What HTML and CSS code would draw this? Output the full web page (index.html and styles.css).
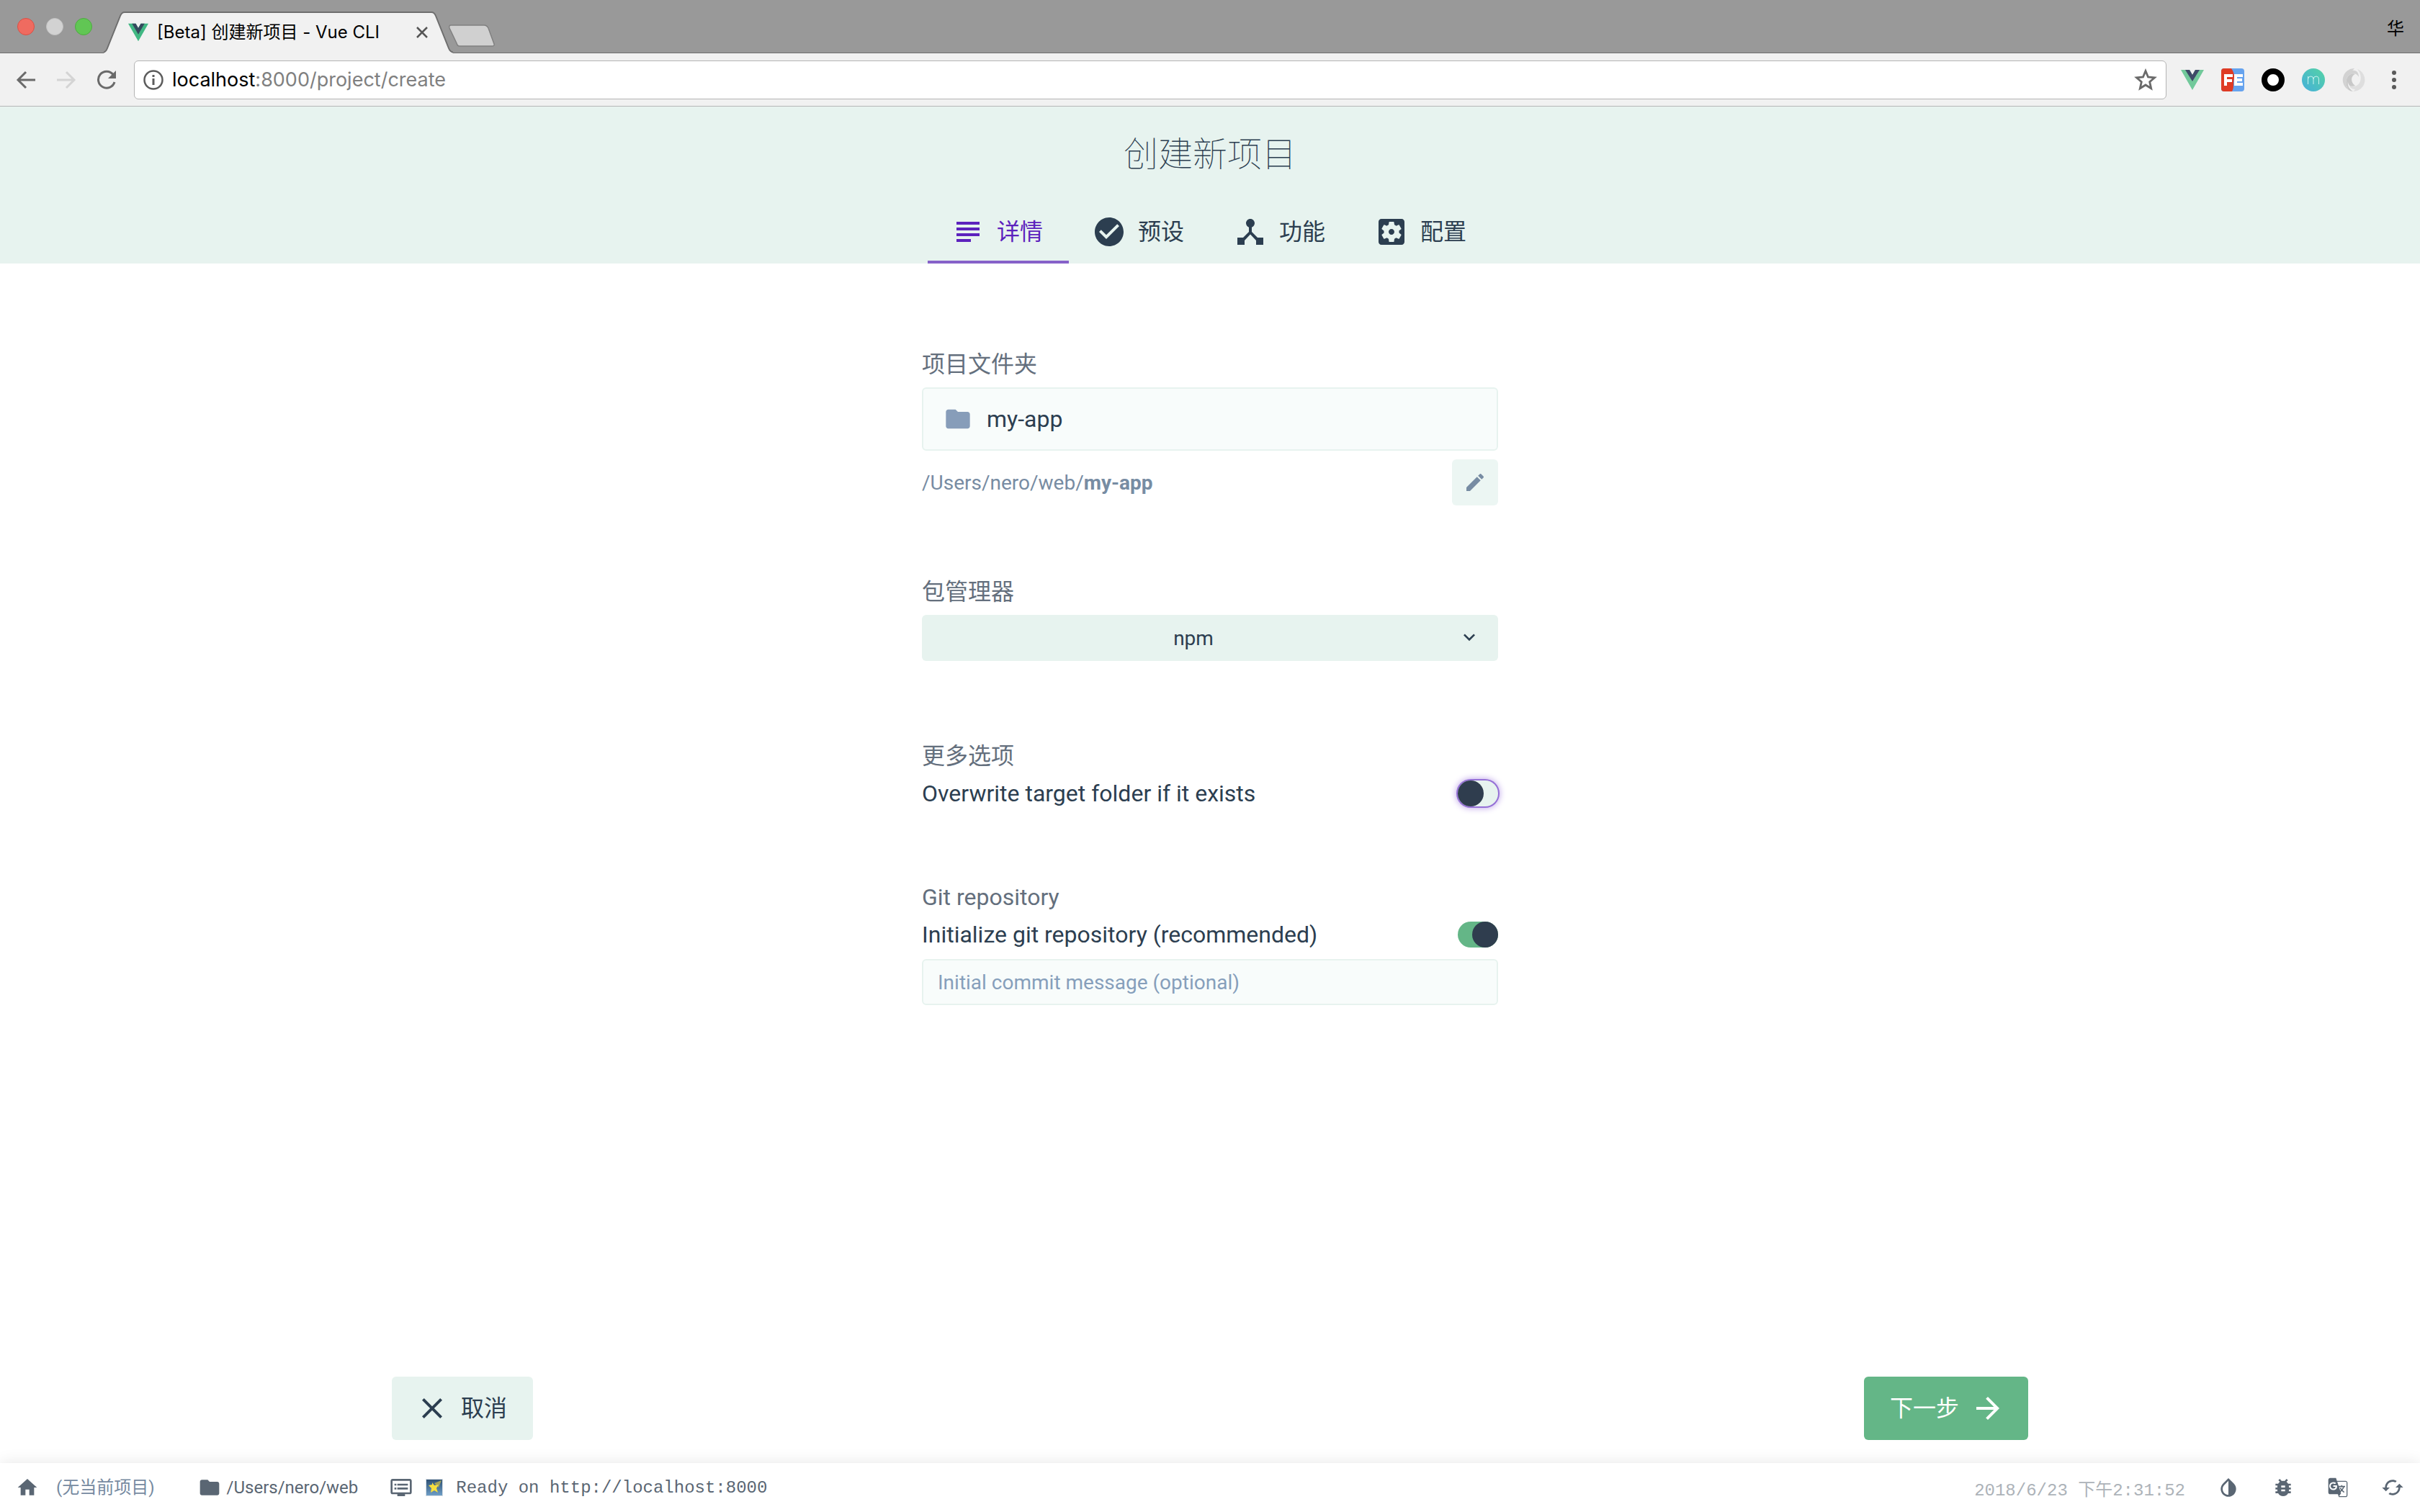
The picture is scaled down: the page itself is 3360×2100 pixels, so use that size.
FILE: index.html
```html
<!DOCTYPE html>
<html lang="zh-CN">
<head>
    <meta charset="UTF-8">
    <meta name="viewport" content="width=device-width, initial-scale=1.0">
    <title>[Beta] 创建新项目 - Vue CLI</title>
    <link rel="stylesheet" href="styles.css">
</head>
<body>
    <div class="browser">
        <div class="tab-strip">
            <div class="lights">
                <button class="light red" aria-label="关闭"></button>
                <button class="light gray" aria-label="最小化"></button>
                <button class="light green" aria-label="全屏"></button>
            </div>
            <div class="browser-tab">
                <svg class="tab-shape" viewBox="0 0 486 58" preserveAspectRatio="none">
                    <path d="M0 57.5 Q3 57 5 51 L23 6 Q25 1 29 1 H455 Q459 1 461 6 L479 51 Q481 57 485 57.5 V58 H0Z" fill="#f1f1f1"/>
                    <path d="M0 56.5 Q3 56 5 51 L23 6 Q25 1 29 1 H455 Q459 1 461 6 L479 51 Q481 56 485 56.5" fill="none" stroke="#6e6e6e" stroke-width="2"/>
                </svg>
                <svg class="favicon" viewBox="0 0 32 28">
                    <path d="M0 0h12l4 7 4-7h12L16 28z" fill="#41b883"/>
                    <path d="M6 0h6l4 7 4-7h6L16 17z" fill="#35495e"/>
                </svg>
                <span class="tab-title">[Beta] 创建新项目 - Vue CLI</span>
                <button class="tab-close" aria-label="关闭标签页">
                    <svg viewBox="0 0 16 16"><path d="M1 1l14 14M15 1L1 15" stroke="#555" stroke-width="2.5"/></svg>
                </button>
            </div>
            <button class="new-tab" aria-label="新标签页">
                <svg viewBox="0 0 66 32"><path d="M4 1h46q4 0 6 4l8 22q1 3-3 3H16q-3 0-4-4L2 5Q1 1 4 1z" fill="#d0d0d0" stroke="#808080" stroke-width="1.5"/></svg>
            </button>
            <span class="profile">华</span>
        </div>

        <div class="toolbar">
            <button class="nav-btn" aria-label="后退">
                <svg viewBox="0 0 28 28"><path d="M27 14H3M14 3L3 14l11 11" fill="none" stroke="#6a6a6a" stroke-width="3"/></svg>
            </button>
            <button class="nav-btn" aria-label="前进">
                <svg viewBox="0 0 28 28"><path d="M1 14h24M14 3l11 11-11 11" fill="none" stroke="#d4d4d4" stroke-width="3"/></svg>
            </button>
            <button class="nav-btn" aria-label="重新加载">
                <svg viewBox="0 0 28 28"><path d="M23 6.500A11.500 11.500 0 1 0 25 17" fill="none" stroke="#6a6a6a" stroke-width="3"/><path d="M27 1v11H16z" fill="#6a6a6a"/></svg>
            </button>
            <div class="omnibox">
                <svg class="info" viewBox="0 0 28 28"><circle cx="14" cy="14" r="12.500" fill="none" stroke="#5c5c5c" stroke-width="2.500"/><path d="M12.500 12h3v9h-3zM12.500 7h3v3h-3z" fill="#5c5c5c"/></svg>
                <div class="url"><span class="host">localhost</span>:8000/project/create</div>
                <button class="star" aria-label="收藏">
                    <svg viewBox="0 0 32 32"><path d="M16 3.500l3.500 8.500 9 .8-6.800 6 2 9-7.700-4.800-7.700 4.800 2-9-6.800-6 9-.8z" fill="none" stroke="#6a6a6a" stroke-width="2.800"/></svg>
                </button>
            </div>
            <div class="extensions">
                <svg viewBox="0 0 32 32"><path d="M0 2h12l4 7 4-7h12L16 30z" fill="#72c99b"/><path d="M6 2h6l4 7 4-7h6L16 18z" fill="#3f4a68"/></svg>
                <svg viewBox="0 0 32 32"><rect width="32" height="32" rx="4" fill="#66a3ee"/><path d="M4 0h10c3 4 4 8 4 12l-1 8c0 5 0 9-2 12H4q-4 0-4-4V4q0-4 4-4z" fill="#df3b24"/><path d="M4 10h12M6 17h9M6 8v16M20 8v16M18 10h12M20 16h9M20 22h10" fill="none" stroke="#fff" stroke-width="4"/></svg>
                <svg viewBox="0 0 32 32"><circle cx="16" cy="16" r="12" fill="#fff" stroke="#000" stroke-width="8"/></svg>
                <svg viewBox="0 0 32 32"><defs><linearGradient id="teal" x1="1" y1="0" x2="0" y2="1"><stop offset="0" stop-color="#55d3a4"/><stop offset="1" stop-color="#45afdb"/></linearGradient></defs><circle cx="16" cy="16" r="16" fill="url(#teal)"/><path d="M8.500 22V11M8.500 15q0-4 4-4 3.500 0 3.500 4v7M16 15q0-4 4-4 3.500 0 3.500 4v7" fill="none" stroke="#c9f2ee" stroke-width="1"/></svg>
                <svg viewBox="0 0 32 32"><path d="M17 0a16 16 0 0 0-8 30c-6-9-4-19 3-22 5-2 9 0 11 4C23 6 20 2 14 3c2-2 3-3 3-3z" fill="#d2d2d2"/><path d="M15 32a16 16 0 0 0 6-31c7 8 6 19-1 23-5 2-10 0-11-5 0 7 4 10 9 10-1 2-3 3-3 3z" fill="#dedede"/><path d="M9 30c-6-9-4-19 3-22 2-1 4-1 6 0-6 2-7 11 0 16-7 2-10-1-10-6-1 5 1 10 7 14-2 0-4-1-6-2z" fill="#c8c8c8"/></svg>
            </div>
            <button class="menu" aria-label="菜单">
                <svg viewBox="0 0 32 32"><circle cx="16" cy="6" r="3" fill="#5a5a5a"/><circle cx="16" cy="16" r="3" fill="#5a5a5a"/><circle cx="16" cy="26" r="3" fill="#5a5a5a"/></svg>
            </button>
        </div>
    </div>

    <header class="header">
        <h1>创建新项目</h1>
        <nav class="tabs">
            <button class="tab active">
                <svg viewBox="0 0 24 24"><path d="M4 17h10v2H4zM4 13h16v2H4zM4 9h16v2H4zM4 5h16v2H4z"/></svg>
                详情
            </button>
            <button class="tab">
                <svg viewBox="0 0 24 24"><path d="M12 2C6.480 2 2 6.480 2 12s4.480 10 10 10 10-4.480 10-10S17.520 2 12 2zm-2 15l-5-5 1.410-1.410L10 14.170l7.590-7.590L19 8l-9 9z"/></svg>
                预设
            </button>
            <button class="tab">
                <svg viewBox="0 0 24 24"><path d="M17 16l-4-4V8.820C14.160 8.400 15 7.300 15 6c0-1.660-1.340-3-3-3S9 4.340 9 6c0 1.300.84 2.400 2 2.820V12l-4 4H3v5h5v-3.050l4-4.200 4 4.200V21h5v-5h-4z"/></svg>
                功能
            </button>
            <button class="tab">
                <svg viewBox="0 0 24 24"><path d="M12 10c-1.100 0-2 .9-2 2s.9 2 2 2 2-.9 2-2-.9-2-2-2zm7-7H5c-1.110 0-2 .9-2 2v14c0 1.100.89 2 2 2h14c1.110 0 2-.9 2-2V5c0-1.100-.89-2-2-2zm-1.750 9c0 .23-.02.46-.05.68l1.480 1.160c.13.11.17.3.08.45l-1.400 2.420c-.09.15-.27.21-.43.15l-1.740-.7c-.36.28-.76.51-1.180.69l-.26 1.850c-.03.17-.18.3-.35.3h-2.800c-.17 0-.32-.13-.35-.29l-.26-1.850c-.43-.18-.82-.41-1.180-.69l-1.740.7c-.16.06-.34 0-.43-.15l-1.400-2.420c-.09-.15-.05-.34.08-.45l1.480-1.160c-.03-.23-.05-.46-.05-.69 0-.23.02-.46.05-.68l-1.480-1.160c-.13-.11-.17-.3-.08-.45l1.400-2.420c.09-.15.27-.21.43-.15l1.740.7c.36-.28.76-.51 1.180-.69l.26-1.850c.03-.17.18-.3.35-.3h2.800c.17 0 .32.13.35.29l.26 1.850c.43.18.82.41 1.180.69l1.740-.7c.16-.06.34 0 .43.15l1.400 2.420c.09.15.05.34-.08.45l-1.480 1.160c.03.23.05.46.05.69z"/></svg>
                配置
            </button>
        </nav>
    </header>

    <main class="content">
        <form class="form" id="create">
            <div class="field">
                <label class="title" for="folder">项目文件夹</label>
                <div class="input large">
                    <svg viewBox="0 0 24 24"><path d="M10 4H4c-1.100 0-1.990.9-1.990 2L2 18c0 1.100.9 2 2 2h16c1.100 0 2-.9 2-2V8c0-1.100-.9-2-2-2h-8l-2-2z"/></svg>
                    <input type="text" id="folder" value="my-app">
                </div>
                <div class="path">
                    <span>/Users/nero/web/<b>my-app</b></span>
                    <button type="button" class="edit" aria-label="编辑路径">
                        <svg viewBox="0 0 24 24"><path d="M3 17.250V21h3.750L17.810 9.940l-3.750-3.750L3 17.250zM20.710 7.040c.39-.39.39-1.020 0-1.410l-2.340-2.340c-.39-.39-1.020-.39-1.410 0l-1.830 1.830 3.750 3.750 1.830-1.830z"/></svg>
                    </button>
                </div>
            </div>

            <div class="field manager">
                <label class="title" for="manager">包管理器</label>
                <div class="select">
                    <select id="manager">
                        <option>npm</option>
                        <option>yarn</option>
                    </select>
                    <svg viewBox="0 0 24 24"><path d="M7.410 7.840L12 12.420l4.590-4.580L18 9.250l-6 6-6-6z"/></svg>
                </div>
            </div>

            <div class="field options">
                <div class="title">更多选项</div>
                <div class="switch">
                    <label for="overwrite">Overwrite target folder if it exists</label>
                    <input type="checkbox" id="overwrite" class="focused">
                </div>
            </div>

            <div class="field">
                <div class="title">Git repository</div>
                <div class="switch">
                    <label for="git">Initialize git repository (recommended)</label>
                    <input type="checkbox" id="git" checked>
                </div>
                <div class="input commit">
                    <input type="text" aria-label="Initial commit message" placeholder="Initial commit message (optional)">
                </div>
            </div>
        </form>

        <div class="actions">
            <button class="btn">
                <svg viewBox="0 0 24 24"><path d="M19 6.410L17.590 5 12 10.590 6.410 5 5 6.410 10.590 12 5 17.590 6.410 19 12 13.410 17.590 19 19 17.590 13.410 12z"/></svg>
                取消
            </button>
            <button class="btn primary" form="create">
                下一步
                <svg viewBox="0 0 24 24"><path d="M12 4l-1.410 1.410L16.170 11H4v2h12.170l-5.580 5.590L12 20l8-8z"/></svg>
            </button>
        </div>
    </main>

    <footer class="status-bar">
        <a class="home" href="#" aria-label="主页"><svg viewBox="0 0 24 24"><path d="M10 20v-6h4v6h5v-8h3L12 3 2 12h3v8z"/></svg></a>
        <span class="project">(无当前项目)</span>
        <div class="cwd">
            <svg viewBox="0 0 24 24"><path d="M10 4H4c-1.100 0-1.990.9-1.990 2L2 18c0 1.100.9 2 2 2h16c1.100 0 2-.9 2-2V8c0-1.100-.9-2-2-2h-8l-2-2z"/></svg>
            <span>/Users/nero/web</span>
        </div>
        <div class="log">
            <svg viewBox="0 0 24 24"><path d="M21 3H3c-1.100 0-2 .9-2 2v12c0 1.100.9 2 2 2h5v2h8v-2h5c1.100 0 1.990-.9 1.990-2L23 5c0-1.100-.9-2-2-2zm0 14H3V5h18v12zm-2-9H8v2h11V8zm0 4H8v2h11v-2zM7 8H5v2h2V8zm0 4H5v2h2v-2z"/></svg>
            <svg class="emoji" viewBox="0 0 24 24">
                <defs><linearGradient id="sky" x1="0" y1="0" x2="0" y2="1"><stop offset="0" stop-color="#2d4f72"/><stop offset="1" stop-color="#6f9fc8"/></linearGradient></defs>
                <rect x="0.500" y="0.500" width="23" height="23" fill="url(#sky)" stroke="#d5dde3"/>
                <path d="M12 6L22 2l-4 10z" fill="#a5a45a"/>
                <path d="M9 5l3 4 6-1-3 5 2 6-5-3-5 3 1-6-4-4 5-1z" fill="#f6df3f"/>
            </svg>
            <span>Ready on http://localhost:8000</span>
        </div>
        <time class="date">2018/6/23 下午2:31:52</time>
        <div class="tools">
            <button aria-label="切换主题"><svg viewBox="0 0 24 24"><path d="M17.660 7.930L12 2.270 6.340 7.930c-3.120 3.120-3.120 8.190 0 11.310C7.900 20.800 9.950 21.580 12 21.580s4.100-.78 5.660-2.340c3.120-3.120 3.120-8.190 0-11.310zM12 19.590c-1.600 0-3.110-.62-4.240-1.760C6.620 16.690 6 15.190 6 13.590s.62-3.110 1.760-4.240L12 5.100v14.490z"/></svg></button>
            <button aria-label="报告问题"><svg viewBox="0 0 24 24"><path d="M20 8h-2.810c-.45-.78-1.070-1.450-1.820-1.960L17 4.410 15.590 3l-2.170 2.170C12.960 5.060 12.490 5 12 5s-.96.060-1.410.17L8.410 3 7 4.410l1.620 1.630C7.880 6.550 7.260 7.220 6.810 8H4v2h2.090c-.05.33-.09.66-.09 1v1H4v2h2v1c0 .34.04.67.090 1H4v2h2.810c1.040 1.790 2.970 3 5.190 3s4.150-1.210 5.190-3H20v-2h-2.090c.05-.33.090-.66.090-1v-1h2v-2h-2v-1c0-.34-.04-.67-.090-1H20V8zm-6 8h-4v-2h4v2zm0-4h-4v-2h4v2z"/></svg></button>
            <button aria-label="翻译"><svg viewBox="0 0 24 24"><path fill-rule="evenodd" d="M4 2h6l1 3h9c1.100 0 2 .9 2 2v13c0 1.100-.9 2-2 2h-7l-1-3H4c-1.100 0-2-.9-2-2V4c0-1.100.9-2 2-2zm7.400 4.200L15.300 18l-2 3H20c.6 0 1-.4 1-1V7c0-.6-.4-1-1-1h-8.600zM7.200 6.300a4.200 4.200 0 1 0 0 8.400c2.500 0 4-1.700 4-4.100l-.1-.8H7.200v1.500h2.400c-.1.800-.9 1.900-2.400 1.900a2.700 2.700 0 1 1 1.800-4.700l1.100-1.100a4.200 4.200 0 0 0-2.900-1.100z"/><path d="M12.500 11h7M16 9.500V11M18 11c-.4 2-2.200 4.300-4 5.500M14.500 12.500c.8 1.700 2.500 3.500 4 4.500" fill="none" stroke="#5a6673" stroke-width="1.200"/></svg></button>
            <button aria-label="刷新"><svg viewBox="0 0 24 24"><path d="M19 8l-4 4h3c0 3.310-2.690 6-6 6-1.010 0-1.970-.25-2.800-.7l-1.460 1.460C8.970 19.540 10.430 20 12 20c4.420 0 8-3.580 8-8h3l-4-4zM6 12c0-3.310 2.690-6 6-6 1.010 0 1.970.25 2.800.7l1.460-1.460C15.030 4.460 13.570 4 12 4c-4.420 0-8 3.580-8 8H1l4 4 4-4H6z"/></svg></button>
        </div>
    </footer>
</body>
</html>
```
FILE: styles.css
```css
* {
    box-sizing: border-box;
}

body {
    margin: 0;
    min-height: 100vh;
    display: flex;
    flex-direction: column;
    background-color: #fff;
    color: #2c3e50;
    font-family: Roboto, "Noto Sans CJK SC", sans-serif;
    font-size: 32px;
}

button, input, select {
    font: inherit;
    color: inherit;
    margin: 0;
    padding: 0;
    border: none;
    background: none;
}

svg {
    display: block;
    flex: none;
    fill: currentColor;
}

/* Ventana del navegador */
.browser {
    font-family: Inter, "Noto Sans CJK SC", sans-serif;
    border-bottom: 1px solid #b6b6b6;
}

.tab-strip {
    display: flex;
    align-items: flex-end;
    height: 74px;
    padding: 0 22px 0 24px;
    background-color: #999;
    box-shadow: inset 0 -1px #6e6e6e;
}

.lights {
    display: flex;
    gap: 16px;
    align-self: center;
    margin-right: 16px;
}

.light {
    width: 24px;
    height: 24px;
    border-radius: 50%;
}

.red {
    background-color: #ef6b60;
    border: 1px solid #da5045;
}

.gray {
    background-color: #d2d2d2;
    border: 1px solid #c2c2c2;
}

.green {
    background-color: #61c654;
    border: 1px solid #4dab40;
}

.browser-tab {
    position: relative;
    display: flex;
    align-items: center;
    width: 486px;
    height: 58px;
    padding: 0 36px 0 34px;
}

.tab-shape {
    position: absolute;
    inset: 0;
    width: 100%;
    height: 100%;
}

.favicon {
    position: relative;
    width: 28px;
    height: 26px;
}

.tab-title {
    position: relative;
    flex: 1;
    margin-left: 12px;
    font-size: 24px;
    line-height: 28px;
    color: #000;
    white-space: nowrap;
}

.tab-close {
    position: relative;
}

.tab-close svg {
    width: 16px;
    height: 16px;
}

.new-tab {
    margin: 0 0 8px -8px;
}

.new-tab svg {
    width: 66px;
    height: 32px;
}

.profile {
    margin-left: auto;
    align-self: center;
    font-size: 24px;
    color: #000;
}

.toolbar {
    display: flex;
    align-items: center;
    height: 73px;
    padding: 0 20px 0 22px;
    background-color: #f1f1f1;
}

.nav-btn {
    margin-right: 28px;
}

.nav-btn svg,
.info {
    width: 28px;
    height: 28px;
}

.omnibox {
    flex: 1;
    display: flex;
    align-items: center;
    gap: 12px;
    height: 54px;
    margin-left: -4px;
    padding: 0 12px;
    background-color: #fff;
    border: 1px solid #b4b4b4;
    border-radius: 6px;
}

.url {
    flex: 1;
    font-size: 27px;
    color: #808080;
}

.host {
    color: #000;
}

.star svg,
.menu svg,
.extensions svg {
    width: 32px;
    height: 32px;
}

.extensions {
    display: flex;
    gap: 24px;
    margin: 0 24px 0 20px;
}

/* Cabecera */
.header {
    background-color: #e7f3ef;
    text-align: center;
}

h1 {
    margin: 0;
    padding-top: 4px;
    font-size: 48px;
    font-weight: 100;
    line-height: 126px;
}

.tabs {
    display: flex;
    justify-content: center;
}

.tab {
    display: flex;
    align-items: center;
    gap: 16px;
    height: 88px;
    padding: 0 36px 0 32px;
    line-height: 44px;
}

.tab svg {
    width: 48px;
    height: 48px;
}

.tab.active {
    color: #5c22bd;
    box-shadow: inset 0 -4px #8661c9;
}

/* Formulario */
.content {
    flex: 1;
    display: flex;
    flex-direction: column;
}

.form {
    width: 100%;
    max-width: 800px;
    margin: 0 auto;
    padding-top: 116px;
}

.field {
    margin-bottom: 96px;
}

.manager {
    margin-bottom: 108px;
}

.options {
    margin-bottom: 92px;
}

.title {
    display: block;
    line-height: 48px;
    color: #646f7d;
}

.field > label.title {
    margin-bottom: 8px;
}

.input {
    display: flex;
    align-items: center;
    height: 64px;
    padding: 0 20px;
    font-size: 28px;
    background-color: #f8fcfb;
    border: 2px solid #e7f3ef;
    border-radius: 6px;
}

.input.large {
    height: 88px;
    padding: 0 28px;
    gap: 20px;
    font-size: 32px;
}

.input input {
    flex: 1;
    min-width: 0;
    outline: none;
}

.input input::placeholder {
    color: #869fbb;
    opacity: 1;
}

.input svg {
    width: 40px;
    height: 40px;
    color: #879db9;
}

.path {
    display: flex;
    align-items: center;
    justify-content: space-between;
    margin-top: 12px;
    font-size: 28px;
    color: #778ca3;
}

.edit {
    padding: 16px;
    background-color: #ecf6f3;
    border-radius: 6px;
}

.edit svg {
    width: 32px;
    height: 32px;
}

.select {
    position: relative;
}

.select select {
    display: block;
    width: 100%;
    height: 64px;
    padding-right: 46px;
    appearance: none;
    font-size: 28px;
    text-align: center;
    text-align-last: center;
    background-color: #e7f3ef;
    border-radius: 6px;
}

.select svg {
    position: absolute;
    top: 16px;
    right: 24px;
    width: 32px;
    height: 32px;
    pointer-events: none;
}

.switch {
    display: flex;
    align-items: center;
    justify-content: space-between;
    height: 56px;
}

.switch input {
    appearance: none;
    display: flex;
    width: 56px;
    height: 36px;
    background-color: #e7f3ef;
    border-radius: 18px;
}

.switch input::before {
    content: "";
    width: 36px;
    height: 36px;
    background-color: #2f3d4e;
    border-radius: 50%;
}

.switch input:checked {
    justify-content: flex-end;
    background-color: #64b687;
}

.switch input.focused {
    box-shadow: 0 0 0 2px #9570d6, 0 0 10px 2px #b79be6;
}

.commit {
    margin-top: 6px;
}

.actions {
    display: flex;
    justify-content: space-between;
    width: 100%;
    max-width: 2400px;
    margin: auto auto 0;
    padding: 32px 64px;
}

.btn {
    display: flex;
    align-items: center;
    gap: 16px;
    height: 88px;
    padding: 0 36px 0 32px;
    line-height: 44px;
    background-color: #e7f3ef;
    border-radius: 6px;
}

.btn svg {
    width: 48px;
    height: 48px;
}

.btn.primary {
    padding: 0 32px 0 36px;
    color: #fff;
    background-color: #64b687;
}

/* Barra de estado */
.status-bar {
    display: flex;
    align-items: center;
    height: 68px;
    padding: 0 22px;
    font-size: 24px;
    color: #5a6673;
    background-color: #fff;
    box-shadow: 0 0 20px rgba(0, 0, 0, 0.1);
}

.status-bar svg {
    width: 32px;
    height: 32px;
}

.home {
    color: inherit;
}

.project {
    margin: 0 60px 0 24px;
    line-height: 32px;
    color: #768aa1;
}

.cwd,
.log {
    display: flex;
    align-items: center;
    gap: 8px;
    margin-right: 44px;
}

.log {
    gap: 18px;
    font-family: "Liberation Mono", "Noto Sans CJK SC", monospace;
}

.status-bar .emoji {
    width: 24px;
    height: 24px;
}

.date {
    margin: 0 44px 0 auto;
    font-family: "Liberation Mono", "Noto Sans CJK SC", monospace;
    color: #adb3b9;
}

.tools {
    display: flex;
    gap: 44px;
}
```
